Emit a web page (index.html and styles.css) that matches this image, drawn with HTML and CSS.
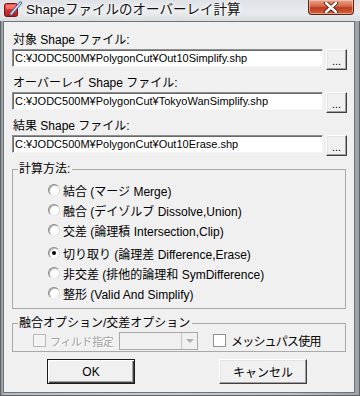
FILE: index.html
```html
<!DOCTYPE html>
<html lang="ja">
<head>
    <meta charset="UTF-8">
    <title>Shapeファイルのオーバーレイ計算</title>
    <link rel="stylesheet" href="styles.css">
</head>
<body>
    <div class="window">
        <div class="titlebar">
            <svg class="app-icon" width="18" height="18" viewBox="0 0 18 18">
                <defs>
                    <linearGradient id="red" x1="0" y1="0" x2="0" y2="1">
                        <stop offset="0" stop-color="#f25a52"/>
                        <stop offset="1" stop-color="#b3161a"/>
                    </linearGradient>
                </defs>
                <rect x="0.5" y="2.5" width="13" height="13" rx="2" fill="url(#red)" stroke="#7d1012"/>
                <rect x="2" y="4" width="10" height="4" rx="1" fill="#ff9c94" opacity="0.5"/>
                <path d="M16.5 2 L7 13" stroke="#3f6797" stroke-width="3.2" stroke-linecap="round"/>
                <path d="M16.5 2 L7 13" stroke="#dfeaf7" stroke-width="1.3" stroke-linecap="round"/>
            </svg>
            <span class="title">Shapeファイルのオーバーレイ計算</span>
            <div class="close">
                <svg width="16" height="11" viewBox="0 0 16 11">
                    <path d="M3 1 L13 10 M13 1 L3 10" stroke="#4a1a10" stroke-width="4.2" stroke-linecap="round"/>
                    <path d="M3 1 L13 10 M13 1 L3 10" stroke="#fff" stroke-width="2.4" stroke-linecap="round"/>
                </svg>
            </div>
        </div>

        <div class="client">
            <div class="field">
                <label>対象 Shape ファイル:</label>
                <div class="file-row">
                    <div class="textbox">C:¥JODC500M¥PolygonCut¥Out10Simplify.shp</div>
                    <button class="browse">...</button>
                </div>
            </div>
            <div class="field">
                <label>オーバーレイ Shape ファイル:</label>
                <div class="file-row">
                    <div class="textbox">C:¥JODC500M¥PolygonCut¥TokyoWanSimplify.shp</div>
                    <button class="browse">...</button>
                </div>
            </div>
            <div class="field">
                <label>結果 Shape ファイル:</label>
                <div class="file-row">
                    <div class="textbox">C:¥JODC500M¥PolygonCut¥Out10Erase.shp</div>
                    <button class="browse">...</button>
                </div>
            </div>

            <fieldset class="group methods">
                <legend>計算方法:</legend>
                <div class="radio-row"><span class="radio"></span>結合 (マージ Merge)</div>
                <div class="radio-row"><span class="radio"></span>融合 (デイゾルブ Dissolve,Union)</div>
                <div class="radio-row"><span class="radio"></span>交差 (論理積 Intersection,Clip)</div>
                <div class="radio-row gap"><span class="radio checked"></span>切り取り (論理差 Difference,Erase)</div>
                <div class="radio-row"><span class="radio"></span>非交差 (排他的論理和 SymDifference)</div>
                <div class="radio-row"><span class="radio"></span>整形 (Valid And Simplify)</div>
            </fieldset>

            <fieldset class="group options">
                <legend>融合オプション/交差オプション</legend>
                <div class="option-row">
                    <div class="check-item field-check disabled"><span class="checkbox"></span>フィルド指定</div>
                    <div class="combo">
                        <span class="combo-arrow"></span>
                    </div>
                    <div class="check-item mesh-check"><span class="checkbox"></span>メッシュパス使用</div>
                </div>
            </fieldset>

            <div class="buttons">
                <button class="btn default">OK</button>
                <button class="btn">キャンセル</button>
            </div>
        </div>
    </div>
</body>
</html>
```

FILE: styles.css
```css
body { margin: 0; font-family: "Liberation Sans", "Noto Sans CJK JP", sans-serif; font-size: 12px; color: #000; }

.window { width: 360px; height: 396px; display: flex; flex-direction: column; box-sizing: border-box; border: 1px solid #5e6468; border-top: none; background: linear-gradient(to right, #8d9398, #b7bcc0 3px, #c9cdd0 40%, #bfc3c7 80%, #9ea3a8); }
.titlebar { height: 21px; display: flex; align-items: flex-start; background: linear-gradient(#dfe2e5, #e9ebed 60%, #d9dde0); margin: 0 -1px; }
.app-icon { margin: 1px 0 0 4px; }
.title { margin: 1px 0 0 4px; font-size: 13.5px; line-height: 18px; color: #111; text-shadow: 0 0 6px #fff, 0 0 3px #fff; }
.close { margin-left: auto; margin-right: 6px; width: 46px; height: 15px; box-sizing: border-box; border: 1px solid #5a2618; border-top: none; border-radius: 0 0 4px 4px; background: linear-gradient(#e9a48f, #d4684a 45%, #c0391d 55%, #d3643f); box-shadow: inset 0 0 0 1px rgba(255, 220, 200, 0.5); display: flex; justify-content: center; align-items: center; }

.client { flex: 1; margin: 0 4px 2px 2px; border: 1px solid #6f7478; background: #f0f0f0; padding: 10px 7px 0 8px; }

.field { margin-bottom: 5px; }
.field label { display: block; height: 16px; line-height: 16px; margin-bottom: 1px; padding-left: 1px; }
.file-row { display: flex; gap: 3px; align-items: flex-start; }
.textbox { flex: 1; height: 18px; box-sizing: border-box; background: #fff; border: 1px solid; border-color: #8f8f8f #f6f6f6 #f6f6f6 #8f8f8f; box-shadow: inset 1px 1px #696969; padding-left: 2px; font-size: 11px; line-height: 16px; white-space: nowrap; overflow: hidden; }
.browse { width: 21px; height: 21px; padding: 0; box-sizing: border-box; font: 11px "Liberation Sans", sans-serif; line-height: 22px; background: #f0f0f0; border: 1px solid; border-color: #fff #404040 #404040 #fff; box-shadow: inset -1px -1px #a0a0a0, inset 1px 1px #e3e3e3; }

.group { margin: 0 1px 0 0; padding: 0; border: 1px solid #a9a9a9; border-radius: 0; }
.group legend { padding: 0 2px 0 1px; margin-left: 5px; height: 16px; line-height: 16px; }

.methods { margin-top: 2px; padding: 3px 0 5px 35px; }
.methods legend { margin-left: -30px; }
.radio-row { height: 20px; display: flex; align-items: center; gap: 3px; }
.radio-row.gap { margin-top: 3px; }
.radio { width: 12px; height: 12px; box-sizing: border-box; border-radius: 50%; background: #fff; border: 1px solid; border-color: #8a8a8a #d8d8d8 #e8e8e8 #8a8a8a; box-shadow: inset 1px 1px #b4b4b4; display: flex; justify-content: center; align-items: center; }
.radio.checked::after { content: ""; width: 4px; height: 4px; border-radius: 50%; background: #000; }

.options { margin-top: 6px; padding: 0 0 1px 20px; }
.options legend { margin-left: -15px; }
.option-row { display: flex; align-items: center; height: 19px; }
.check-item { display: flex; align-items: center; gap: 4px; white-space: nowrap; }
.checkbox { width: 13px; height: 13px; flex-shrink: 0; box-sizing: border-box; background: #fff; border: 1px solid #8e8f8f; }
.field-check { width: 86px; flex-shrink: 0; font-size: 11px; color: #a0a0a0; text-shadow: 1px 1px #fff; letter-spacing: -0.4px; }
.field-check .checkbox { background: #f4f4f4; border-color: #b8b8b8; }
.combo { width: 79px; height: 18px; flex-shrink: 0; box-sizing: border-box; border: 1px solid #a8a8a8; background: #f0f0f0; display: flex; justify-content: flex-end; }
.combo-arrow { width: 16px; box-sizing: border-box; border-left: 1px solid #c4c4c4; display: flex; justify-content: center; align-items: center; }
.combo-arrow::after { content: ""; border: 4px solid transparent; border-top: 4px solid #b0b0b0; border-bottom: 0; margin-top: 1px; }
.mesh-check { margin-left: 15px; gap: 5px; letter-spacing: -0.8px; }

.buttons { display: flex; gap: 84px; margin-top: 7px; padding-left: 35px; }
.btn { width: 88px; height: 25px; padding: 0; box-sizing: border-box; font: 12px "Liberation Sans", "Noto Sans CJK JP", sans-serif; background: #f0f0f0; border: 1px solid; border-color: #fff #404040 #404040 #fff; box-shadow: inset -1px -1px #a0a0a0, inset 1px 1px #e3e3e3; }
.btn.default { border: 1px solid #1a1a1a; box-shadow: inset 1px 1px #fff, inset -1px -1px #404040, inset -2px -2px #a0a0a0; }
```
